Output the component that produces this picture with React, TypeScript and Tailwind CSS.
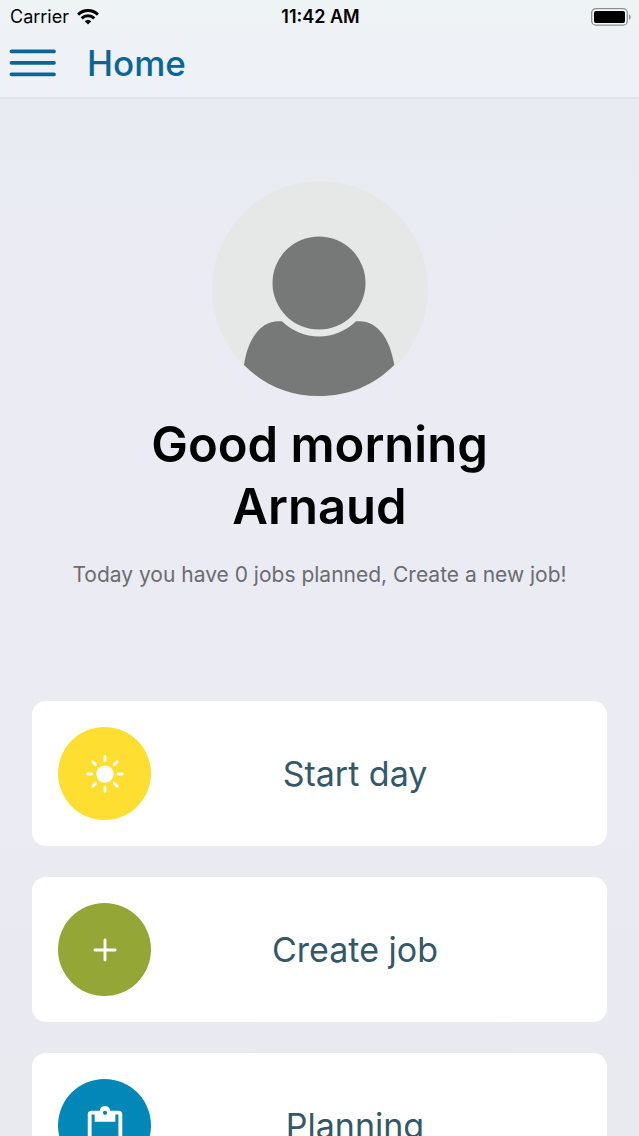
import React from 'react';
import { IoIosAdd, IoIosSunny } from 'react-icons/io';

const WifiIcon: React.FC = () => (
  <svg viewBox="0 0 22 16" className="h-4 w-[22px]" fill="none" stroke="#000" strokeWidth="3" aria-hidden="true">
    <path d="M1.1 5.6a14.2 14.2 0 0 1 19.8 0" />
    <path d="M4.7 9.4a9 9 0 0 1 12.6 0" />
    <path d="M11 15.6 7.7 12.3a4.8 4.8 0 0 1 6.6 0Z" fill="#000" stroke="none" />
  </svg>
);

const BatteryIcon: React.FC = () => (
  <svg viewBox="0 0 40 18" className="h-[18px] w-10" aria-hidden="true">
    <rect x="0.7" y="0.7" width="35.6" height="16.4" rx="4.2" fill="#f8f9fa" stroke="#8b8e90" strokeWidth="1.3" />
    <rect x="3" y="3" width="31" height="12" rx="2" fill="#000" />
    <path d="M38 6.2c2.2 1 2.2 4.6 0 5.6Z" fill="#8b8e90" />
  </svg>
);

const ClipboardIcon: React.FC = () => (
  <svg viewBox="0 -2 24 24" className="size-[46px]" fill="#fff" aria-hidden="true">
    <path d="M19 2h-4.18C14.4.3 13.3-.4 12-.4S9.6.3 9.18 2H5a2 2 0 0 0-2 2v16a2 2 0 0 0 2 2h14a2 2 0 0 0 2-2V4a2 2 0 0 0-2-2Zm-7 0a1.100 1.100 0 1 1 0 2.200 1.100 1.100 0 0 1 0-2.200Zm7 18H5V4h1.600v3.800h10.800V4H19v16Z" />
  </svg>
);

const Avatar: React.FC = () => (
  <svg viewBox="0 0 216 216" className="size-[216px]" role="img" aria-label="Profile">
    <circle cx="108" cy="108" r="108" fill="#e6e8e8" />
    <circle cx="107" cy="102" r="46.5" fill="#777979" />
    <path
      d="M32 184C36 157 49 140 67 140.300L70 140.300C80 150 93 155.500 107 155.500S134 150 144 140.300L147 140.300C165 140 178 157 182.300 184C161 205 136 215 107 215S53 205 32 184Z"
      fill="#777979"
    />
  </svg>
);

const actions = [
  { label: 'Start day', color: 'bg-[#ffde32]', icon: <IoIosSunny className="size-[46px] text-white" /> },
  { label: 'Create job', color: 'bg-[#93a636]', icon: <IoIosAdd className="size-[46px] text-white" /> },
  { label: 'Planning', color: 'bg-[#0387b8]', icon: <ClipboardIcon /> },
];

export default function App() {
  return (
    <div className="flex h-screen flex-col overflow-hidden bg-[#eaebf3] font-[Inter,sans-serif]">
      <header className="shrink-0 border-b-2 border-[#e0e3e7] bg-linear-to-b from-[#eef3f4] to-[#eef1f7]">
        <div className="grid h-[33px] grid-cols-3 items-center pr-2 pl-[10px] text-lg text-black">
          <div className="flex items-center gap-2">
            <span>Carrier</span>
            <WifiIcon />
          </div>
          <time className="text-center font-semibold">11:42 AM</time>
          <div className="flex justify-end">
            <BatteryIcon />
          </div>
        </div>
        <div className="flex h-16 items-center gap-[30px] pb-1 pl-[9px]">
          <button type="button" aria-label="Menu">
            <svg viewBox="0 0 48 28" className="h-7 w-12" stroke="#0b6698" strokeWidth="3.8" strokeLinecap="round" aria-hidden="true">
              <path d="M2.500 2.300h42.500M2.500 13.800h42.500M2.500 25.300h42.500" />
            </svg>
          </button>
          <h1 className="text-[35px] leading-10 font-medium text-[#0b6698]">Home</h1>
        </div>
      </header>

      <main className="min-h-0 flex-1 overflow-y-auto bg-linear-to-b from-[#e9ebf2] via-[#ebebf4] to-[#e8eaf0] [scrollbar-width:none]">
        <section className="flex flex-col items-center px-8 pt-[82px] pb-[110px] text-center">
          <Avatar />
          <h2 className="mt-[17px] text-[49px] leading-[62px] font-semibold text-black">
            Good morning
            <br />
            Arnaud
          </h2>
          <p className="mt-[21px] text-[21px] leading-8 text-[#6b6c70]">Today you have 0 jobs planned, Create a new job!</p>
        </section>

        <nav className="flex flex-col gap-[31px] px-8 pb-8">
          {actions.map((action) => (
            <button key={action.label} type="button" className="flex w-full items-center rounded-[14px] bg-white py-[26px] pr-12 pl-[26px]">
              <span className={`flex size-[93px] shrink-0 items-center justify-center rounded-full ${action.color}`}>{action.icon}</span>
              <span className="flex-1 text-center text-[34px] leading-10 text-[#35576a]">{action.label}</span>
            </button>
          ))}
        </nav>
      </main>
    </div>
  );
}
